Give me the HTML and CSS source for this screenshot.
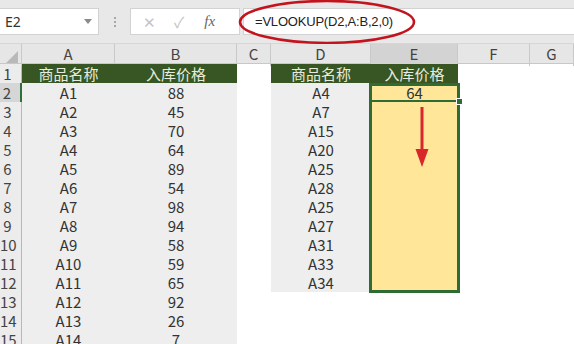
FILE: index.html
```html
<!DOCTYPE html>
<html lang="zh-CN">
<head>
  <meta charset="UTF-8" />
  <title>VLOOKUP</title>
  <link rel="stylesheet" href="styles.css">
</head>
<body>
  <div class="formula-bar">
    <div class="name-box">E2<span class="caret"></span></div>
    <div class="grip"><i></i><i></i><i></i></div>
    <div class="fx-buttons">
      <span class="btn">✕</span>
      <span class="btn">✓</span>
      <span class="fx">fx</span>
    </div>
    <div class="formula">=VLOOKUP(D2,A:B,2,0)</div>
    <svg class="ring" width="184" height="48" viewBox="0 0 184 48">
      <ellipse cx="90" cy="23" rx="87" ry="21" fill="none" stroke="#c3141e" stroke-width="2.6"/>
    </svg>
  </div>

  <div class="sheet">
    <div class="row head">
      <span class="corner"></span>
      <span>A</span><span>B</span><span>C</span><span>D</span><span class="active-col">E</span><span>F</span><span>G</span>
    </div>
    <div class="row">
      <span class="num">1</span>
      <span class="hd">商品名称</span><span class="hd">入库价格</span><span></span>
      <span class="hd">商品名称</span><span class="hd">入库价格</span><span></span><span></span>
    </div>
    <div class="row">
      <span class="num active-row">2</span>
      <span class="g">A1</span><span class="g">88</span><span></span>
      <span class="g">A4</span><span class="y">64</span><span></span><span></span>
    </div>
    <div class="row">
      <span class="num">3</span>
      <span class="g">A2</span><span class="g">45</span><span></span>
      <span class="g">A7</span><span class="y"></span><span></span><span></span>
    </div>
    <div class="row">
      <span class="num">4</span>
      <span class="g">A3</span><span class="g">70</span><span></span>
      <span class="g">A15</span><span class="y"></span><span></span><span></span>
    </div>
    <div class="row">
      <span class="num">5</span>
      <span class="g">A4</span><span class="g">64</span><span></span>
      <span class="g">A20</span><span class="y"></span><span></span><span></span>
    </div>
    <div class="row">
      <span class="num">6</span>
      <span class="g">A5</span><span class="g">89</span><span></span>
      <span class="g">A25</span><span class="y"></span><span></span><span></span>
    </div>
    <div class="row">
      <span class="num">7</span>
      <span class="g">A6</span><span class="g">54</span><span></span>
      <span class="g">A28</span><span class="y"></span><span></span><span></span>
    </div>
    <div class="row">
      <span class="num">8</span>
      <span class="g">A7</span><span class="g">98</span><span></span>
      <span class="g">A25</span><span class="y"></span><span></span><span></span>
    </div>
    <div class="row">
      <span class="num">9</span>
      <span class="g">A8</span><span class="g">94</span><span></span>
      <span class="g">A27</span><span class="y"></span><span></span><span></span>
    </div>
    <div class="row">
      <span class="num">10</span>
      <span class="g">A9</span><span class="g">58</span><span></span>
      <span class="g">A31</span><span class="y"></span><span></span><span></span>
    </div>
    <div class="row">
      <span class="num">11</span>
      <span class="g">A10</span><span class="g">59</span><span></span>
      <span class="g">A33</span><span class="y"></span><span></span><span></span>
    </div>
    <div class="row">
      <span class="num">12</span>
      <span class="g">A11</span><span class="g">65</span><span></span>
      <span class="g">A34</span><span class="y"></span><span></span><span></span>
    </div>
    <div class="row">
      <span class="num">13</span>
      <span class="g">A12</span><span class="g">92</span><span></span>
      <span></span><span></span><span></span><span></span>
    </div>
    <div class="row">
      <span class="num">14</span>
      <span class="g">A13</span><span class="g">26</span><span></span>
      <span></span><span></span><span></span><span></span>
    </div>
    <div class="row">
      <span class="num">15</span>
      <span class="g">A14</span><span class="g">7</span><span></span>
      <span></span><span></span><span></span><span></span>
    </div>

    <!-- selection box over E2:E12 -->
    <div class="selection"><div class="first"></div><i class="handle"></i></div>
    <svg class="arrow" width="16" height="62" viewBox="0 0 16 62">
      <line x1="8" y1="0" x2="8" y2="44" stroke="#d8262b" stroke-width="3"/>
      <polygon points="1.5,42 14.5,42 8,60" fill="#d8262b"/>
    </svg>
  </div>
</body>
</html>
```

FILE: styles.css
```css
body {
  margin: 0;
  width: 574px;
  height: 344px;
  overflow: hidden;
  background: #fff;
  font-family: "Noto Sans", "Noto Sans CJK SC", sans-serif;
  color: #333;
}

/* formula bar */
.formula-bar {
  position: relative;
  height: 44px;
  box-sizing: border-box;
  padding-top: 8px;
  background: #e8e8e8;
  border-bottom: 1px solid #d6d6d6;
  display: flex;
  align-items: flex-start;
}

.name-box {
  width: 99px;
  height: 27px;
  box-sizing: border-box;
  background: #fff;
  border: 1px solid #d2d2d2;
  border-left: none;
  padding: 0 6px 0 5px;
  display: flex;
  align-items: center;
  justify-content: space-between;
  font-size: 14px;
}

.caret {
  width: 0;
  height: 0;
  border-left: 4px solid transparent;
  border-right: 4px solid transparent;
  border-top: 5px solid #8a8a8a;
}

.grip {
  width: 31px;
  height: 27px;
  display: flex;
  flex-direction: column;
  align-items: center;
  justify-content: center;
  gap: 2px;
}

.grip i {
  width: 2px;
  height: 2px;
  background: #a8a8a8;
}

.fx-buttons {
  width: 110px;
  height: 27px;
  box-sizing: border-box;
  background: #fff;
  border: 1px solid #d2d2d2;
  display: flex;
  align-items: center;
  padding-left: 12px;
  gap: 18px;
  color: #c4c4c4;
  font-size: 15px;
}

.fx {
  font-family: "Liberation Serif", serif;
  font-style: italic;
  color: #666;
  font-size: 15px;
  margin-left: 2px;
}

.formula {
  flex: 1;
  margin-left: 3px;
  height: 27px;
  box-sizing: border-box;
  background: #fff;
  border: 1px solid #d2d2d2;
  border-right: none;
  padding-left: 11px;
  line-height: 25px;
  font-family: "Liberation Sans", sans-serif;
  font-size: 13px;
  letter-spacing: -0.2px;
  color: #222;
}

.ring {
  position: absolute;
  left: 237px;
  top: -1px;
}

/* grid */
.sheet {
  position: relative;
}

.row {
  display: grid;
  grid-template-columns: 22px 93px 122px 34px 100px 87px 72px 1fr;
  height: 19px;
  font-family: "Noto Sans CJK SC", sans-serif;
  font-size: 15px;
  line-height: 19px;
}

.row span {
  text-align: center;
  box-sizing: border-box;
  white-space: nowrap;
}

.row.head {
  height: 20px;
  line-height: 20px;
  background: #e6e6e6;
  border-bottom: 1px solid #c8c8c8;
  box-sizing: border-box;
  color: #444;
}

.row.head span {
  border-right: 1px solid #c9c9c9;
}

.row.head .active-col {
  background: #d3d3d3;
  border-bottom: 2px solid #2f6f3a;
}

.corner {
  position: relative;
}

.corner::after {
  content: "";
  position: absolute;
  right: 3px;
  bottom: 3px;
  border-left: 12px solid transparent;
  border-bottom: 12px solid #b9b9b9;
}

.num {
  background: #ececec;
  border-right: 1px solid #b8b8b8;
  border-bottom: 1px solid #d4d4d4;
  padding-right: 6px;
  color: #444;
}

.num.active-row {
  background: #d6d6d6;
  border-right: 2px solid #2f6f3a;
}

.hd {
  background: #375623;
  color: #e8ecdf;
  border-bottom: 1px solid #fff;
}

.g {
  background: #eeeeee;
  border-bottom: 1px solid #fff;
}

.y {
  background: #ffe699;
  border-bottom: 1px solid #fff3cc;
}

.selection {
  position: absolute;
  left: 369px;
  top: 39px;
  width: 91px;
  height: 210px;
  box-sizing: border-box;
  border: 3px solid #2f6b35;
}

.selection .first {
  height: 14px;
  border-bottom: 2px solid #2f6b35;
}

.handle {
  position: absolute;
  right: -6px;
  top: 12px;
  width: 5px;
  height: 5px;
  background: #2f6b35;
  border: 1px solid #fff;
}

.arrow {
  position: absolute;
  left: 414px;
  top: 63px;
}
```
